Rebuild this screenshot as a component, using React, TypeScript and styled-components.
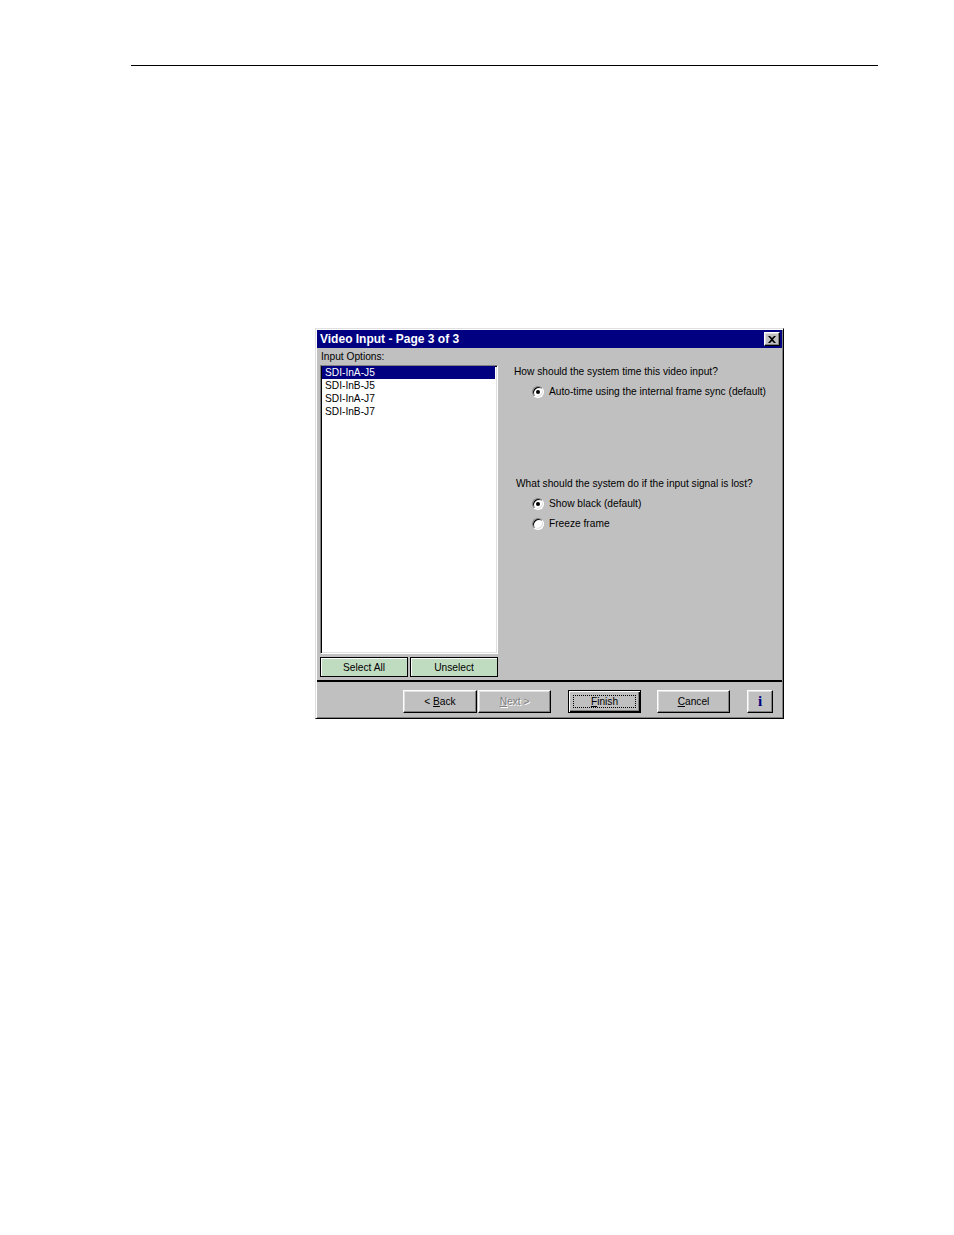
import React from "react";
import styled, { createGlobalStyle, css } from "styled-components";

const Global = createGlobalStyle`
  html, body { margin: 0; padding: 0; background: #fff; }
  body { font-family: "Liberation Sans", Arial, sans-serif; }
`;

const Page = styled.div`
  width: 954px;
  height: 1235px;
  padding-top: 65px;
  box-sizing: border-box;
  background: #fff;
  overflow: hidden;
`;

const Rule = styled.div`
  margin-left: 131px;
  width: 747px;
  height: 1px;
  background: #000;
`;

const Dialog = styled.div`
  margin-left: 315px;
  margin-top: 262px;
  width: 469px;
  height: 391px;
  box-sizing: border-box;
  background: #c0c0c0;
  border: 1px solid;
  border-color: #dfdfdf #000 #000 #dfdfdf;
  box-shadow: inset 1px 1px #fff, inset -1px -1px #808080;
  padding: 1px;
  display: flex;
  flex-direction: column;
  font-family: "Liberation Sans", Arial, sans-serif;
  font-size: 10.2px;
  color: #000;
`;

const TitleBar = styled.div`
  height: 18px;
  background: #000080;
  display: flex;
  align-items: center;
  justify-content: space-between;
  padding: 0 2px 0 3px;
  color: #fff;
  font-weight: bold;
  font-size: 12px;
`;

const bevel = css`
  border: 1px solid;
  border-color: #fff #000 #000 #fff;
  box-shadow: inset -1px -1px #808080, inset 1px 1px #dfdfdf;
`;

const CloseButton = styled.div`
  ${bevel};
  width: 16px;
  height: 14px;
  box-sizing: border-box;
  background: #c0c0c0;
  display: flex;
  align-items: center;
  justify-content: center;
`;

const Body = styled.div`
  flex: 1;
  display: flex;
  padding: 0 0 0 3px;
`;

const LeftColumn = styled.div`
  width: 178px;
  display: flex;
  flex-direction: column;
`;

const Label = styled.div`
  height: 17px;
  line-height: 17px;
  padding-left: 1px;
`;

const ListBox = styled.div`
  height: 289px;
  box-sizing: border-box;
  background: #fff;
  border: 1px solid;
  border-color: #808080 #fff #fff #808080;
  box-shadow: inset 1px 1px #000, inset -1px -1px #dfdfdf;
  padding: 0 2px 0 1px;
  display: flex;
  flex-direction: column;
`;

const ListItem = styled.div<{ $selected?: boolean }>`
  height: 13px;
  line-height: 13px;
  padding-left: 3px;
  background: ${(p) => (p.$selected ? "#000080" : "transparent")};
  color: ${(p) => (p.$selected ? "#fff" : "#000")};
`;

const ListButtons = styled.div`
  margin-top: 3px;
  display: flex;
  gap: 2px;
`;

const GreenButton = styled.div`
  flex: 1;
  height: 20px;
  box-sizing: border-box;
  background: #c0dcc0;
  border: 1px solid #000;
  box-shadow: inset 1px 1px #fff;
  display: flex;
  align-items: center;
  justify-content: center;
`;

const RightPanel = styled.div`
  flex: 1;
  padding: 17px 0 0 16px;
  display: flex;
  flex-direction: column;
`;

const Question = styled.div<{ $shift?: number }>`
  height: 13px;
  line-height: 13px;
  margin-left: ${(p) => p.$shift ?? 0}px;
`;

const Options = styled.div`
  margin-top: 7px;
  padding-left: 18px;
  display: flex;
  flex-direction: column;
  gap: 7px;
`;

const OptionRow = styled.div`
  display: flex;
  align-items: center;
  gap: 5px;
  height: 13px;
`;

const Radio = styled.span<{ $checked?: boolean }>`
  width: 12px;
  height: 12px;
  box-sizing: border-box;
  border-radius: 50%;
  background: #fff;
  border: 1px solid;
  border-color: #808080 #fff #fff #808080;
  box-shadow: inset 1px 1px #000, inset -1px -1px #dfdfdf;
  position: relative;
  flex: none;
  &::after {
    content: "";
    display: ${(p) => (p.$checked ? "block" : "none")};
    position: absolute;
    left: 3px;
    top: 3px;
    width: 4px;
    height: 4px;
    border-radius: 50%;
    background: #000;
  }
`;

const Spacer = styled.div<{ $h: number }>`
  height: ${(p) => p.$h}px;
  flex: none;
`;

const Separator = styled.div`
  height: 2px;
  background: #000;
`;

const Footer = styled.div`
  height: 35px;
  display: flex;
  justify-content: flex-end;
  align-items: flex-start;
  padding: 8px 9px 0 0;
  box-sizing: border-box;
`;

const PushButton = styled.div<{ $w: number; $gap?: number; $disabled?: boolean; $default?: boolean }>`
  width: ${(p) => p.$w}px;
  height: 23px;
  margin-left: ${(p) => p.$gap ?? 0}px;
  box-sizing: border-box;
  background: #c0c0c0;
  display: flex;
  align-items: center;
  justify-content: center;
  color: ${(p) => (p.$disabled ? "#808080" : "#000")};
  text-shadow: ${(p) => (p.$disabled ? "1px 1px #fff" : "none")};
  ${(p) =>
    p.$default
      ? css`
          border: 1px solid #000;
          box-shadow: inset 1px 1px #fff, inset -1px -1px #000, inset -2px -2px #808080;
        `
      : bevel}
`;

const Caption = styled.span`
  white-space: pre;
`;

const FocusRect = styled.span`
  display: flex;
  align-items: center;
  justify-content: center;
  width: calc(100% - 8px);
  height: calc(100% - 8px);
  border: 1px dotted #000;
  box-sizing: border-box;
`;

const InfoGlyph = styled.span`
  font-family: "Liberation Serif", "Times New Roman", serif;
  font-weight: bold;
  font-size: 15px;
  color: #000080;
`;

const U = styled.span`
  text-decoration: underline;
`;

export default function App() {
  return (
    <>
      <Global />
      <Page>
        <Rule />
        <Dialog>
          <TitleBar>
            <span>Video Input - Page 3 of 3</span>
            <CloseButton>
              <svg width="8" height="7" viewBox="0 0 8 7">
                <path d="M0 0h2l2 2 2-2h2L5 3.5 8 7H6L4 5 2 7H0l3-3.5z" fill="#000" />
              </svg>
            </CloseButton>
          </TitleBar>
          <Body>
            <LeftColumn>
              <Label>Input Options:</Label>
              <ListBox>
                <ListItem $selected>SDI-InA-J5</ListItem>
                <ListItem>SDI-InB-J5</ListItem>
                <ListItem>SDI-InA-J7</ListItem>
                <ListItem>SDI-InB-J7</ListItem>
              </ListBox>
              <ListButtons>
                <GreenButton>Select All</GreenButton>
                <GreenButton>Unselect</GreenButton>
              </ListButtons>
            </LeftColumn>
            <RightPanel>
              <Question>How should the system time this video input?</Question>
              <Options>
                <OptionRow>
                  <Radio $checked />
                  <Caption>Auto-time using the internal frame sync (default)</Caption>
                </OptionRow>
              </Options>
              <Spacer $h={79} />
              <Question $shift={2}>What should the system do if the input signal is lost?</Question>
              <Options>
                <OptionRow>
                  <Radio $checked />
                  <Caption>Show black (default)</Caption>
                </OptionRow>
                <OptionRow>
                  <Radio />
                  <Caption>Freeze frame</Caption>
                </OptionRow>
              </Options>
            </RightPanel>
          </Body>
          <Separator />
          <Footer>
            <PushButton $w={74}>
              <Caption>
                {"< "}
                <U>B</U>ack
              </Caption>
            </PushButton>
            <PushButton $w={73} $gap={1} $disabled>
              <Caption>
                <U>N</U>
                {"ext >"}
              </Caption>
            </PushButton>
            <PushButton $w={73} $gap={17} $default>
              <FocusRect>
                <Caption>
                  <U>F</U>inish
                </Caption>
              </FocusRect>
            </PushButton>
            <PushButton $w={73} $gap={16}>
              <Caption>
                <U>C</U>ancel
              </Caption>
            </PushButton>
            <PushButton $w={26} $gap={17}>
              <InfoGlyph>i</InfoGlyph>
            </PushButton>
          </Footer>
        </Dialog>
      </Page>
    </>
  );
}
